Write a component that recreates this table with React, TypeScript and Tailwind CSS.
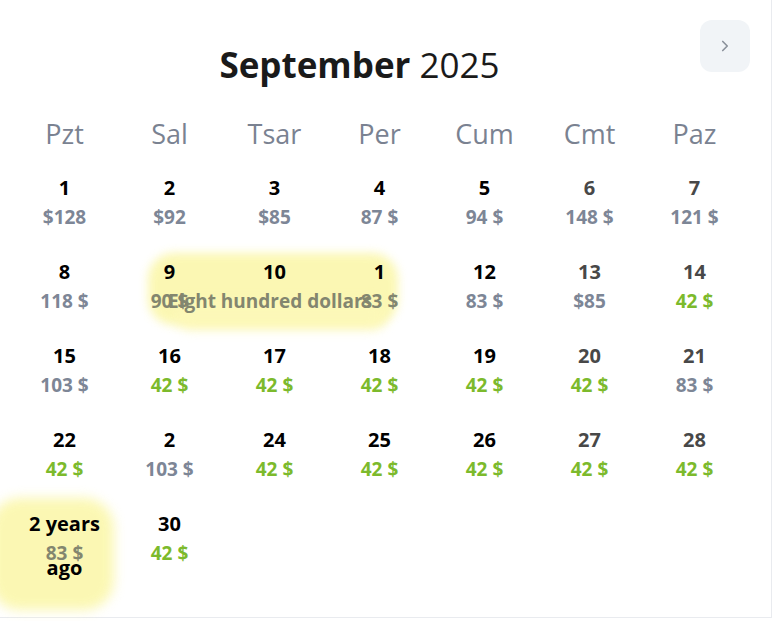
import React from 'react';

type Day = {
  n: string;
  price: string;
  tone: 'gray' | 'green' | 'muted';
  weekend?: boolean;
  extra?: string;
};

const weekdays = ['Pzt', 'Sal', 'Tsar', 'Per', 'Cum', 'Cmt', 'Paz'];

const rows: (Day | null)[][] = [
  [
    { n: '1', price: '$128', tone: 'gray' },
    { n: '2', price: '$92', tone: 'gray' },
    { n: '3', price: '$85', tone: 'gray' },
    { n: '4', price: '87 $', tone: 'gray' },
    { n: '5', price: '94 $', tone: 'gray' },
    { n: '6', price: '148 $', tone: 'gray', weekend: true },
    { n: '7', price: '121 $', tone: 'gray', weekend: true },
  ],
  [
    { n: '8', price: '118 $', tone: 'gray' },
    { n: '9', price: '90 $', tone: 'muted' },
    { n: '10', price: '', tone: 'muted' },
    { n: '1', price: '83 $', tone: 'muted' },
    { n: '12', price: '83 $', tone: 'gray' },
    { n: '13', price: '$85', tone: 'gray', weekend: true },
    { n: '14', price: '42 $', tone: 'green', weekend: true },
  ],
  [
    { n: '15', price: '103 $', tone: 'gray' },
    { n: '16', price: '42 $', tone: 'green' },
    { n: '17', price: '42 $', tone: 'green' },
    { n: '18', price: '42 $', tone: 'green' },
    { n: '19', price: '42 $', tone: 'green' },
    { n: '20', price: '42 $', tone: 'green', weekend: true },
    { n: '21', price: '83 $', tone: 'gray', weekend: true },
  ],
  [
    { n: '22', price: '42 $', tone: 'green' },
    { n: '2', price: '103 $', tone: 'gray' },
    { n: '24', price: '42 $', tone: 'green' },
    { n: '25', price: '42 $', tone: 'green' },
    { n: '26', price: '42 $', tone: 'green' },
    { n: '27', price: '42 $', tone: 'green', weekend: true },
    { n: '28', price: '42 $', tone: 'green', weekend: true },
  ],
  [
    { n: '2 years', price: '83 $', tone: 'muted', extra: 'ago' },
    { n: '30', price: '42 $', tone: 'green' },
    null,
    null,
    null,
    null,
    null,
  ],
];

const toneClass = {
  gray: 'text-[#7d8696]',
  green: 'text-[#7cba2c]',
  muted: 'text-[#83866f]',
};

function Cell({ day }: { day: Day | null }) {
  if (!day) return <div className="h-[84px]" />;
  return (
    <div className="relative z-10 flex h-[84px] flex-col items-center">
      <span
        className={`text-[20px] font-bold leading-[28px] ${day.weekend ? 'text-[#484848]' : 'text-black'}`}
      >
        {day.n}
      </span>
      <span className={`text-[19px] font-bold leading-[30px] ${toneClass[day.tone]}`}>
        {day.price}
      </span>
      {day.extra && (
        <span className="-mt-[11px] text-[20px] font-bold leading-[22px] text-black">{day.extra}</span>
      )}
    </div>
  );
}

export default function App() {
  return (
    <div
      className="relative h-[621px] w-[773px] overflow-hidden bg-white"
      style={{ fontFamily: '"Open Sans", "Noto Sans", sans-serif' }}
    >
      <div className="relative h-[618px] w-[772px] border-r border-b border-[#e9ebef]">
        {/* highlighter marks */}
        <div className="absolute left-[148px] top-[253px] h-[72px] w-[250px] rounded-[26px] bg-[#fbf7ab] opacity-90 blur-[5px]" />
        <div className="absolute left-[176px] top-[301px] h-[28px] w-[210px] rounded-full bg-[#fcf8b8] blur-[6px]" />
        <div className="absolute -left-[10px] top-[498px] h-[112px] w-[124px] rounded-[30px] bg-[#fbf7ab] opacity-90 blur-[6px]" />

        <div className="relative flex h-[88px] items-end justify-center pr-[52px]">
          <h1 className="text-[35px] leading-[46px] text-[#1a1a1a]">
            <span className="font-bold">September</span> 2025
          </h1>
          <button className="absolute right-[21px] top-[20px] flex h-[52px] w-[50px] items-center justify-center rounded-[12px] bg-[#f1f4f7]">
            <svg width="18" height="18" viewBox="0 0 24 24" fill="none" stroke="#8a909a" strokeWidth="2.2" strokeLinecap="round" strokeLinejoin="round">
              <path d="M9 6l6 6-6 6" />
            </svg>
          </button>
        </div>

        <div className="pl-[12px] pt-[26px]">
          <div className="grid h-[40px] w-[735px] grid-cols-7 items-center">
            {weekdays.map((w) => (
              <span key={w} className="text-center text-[27px] leading-[40px] text-[#7a8291]">
                {w}
              </span>
            ))}
          </div>
          <div className="relative mt-[20px] w-[735px]">
            <div className="grid grid-cols-7">
              {rows.flat().map((d, i) => (
                <Cell key={i} day={d} />
              ))}
            </div>
            <span className="absolute left-[156px] top-[112px] z-20 text-[19px] font-bold leading-[30px] text-[#83866f]">
              Eight hundred dollars
            </span>
          </div>
        </div>
      </div>
    </div>
  );
}
